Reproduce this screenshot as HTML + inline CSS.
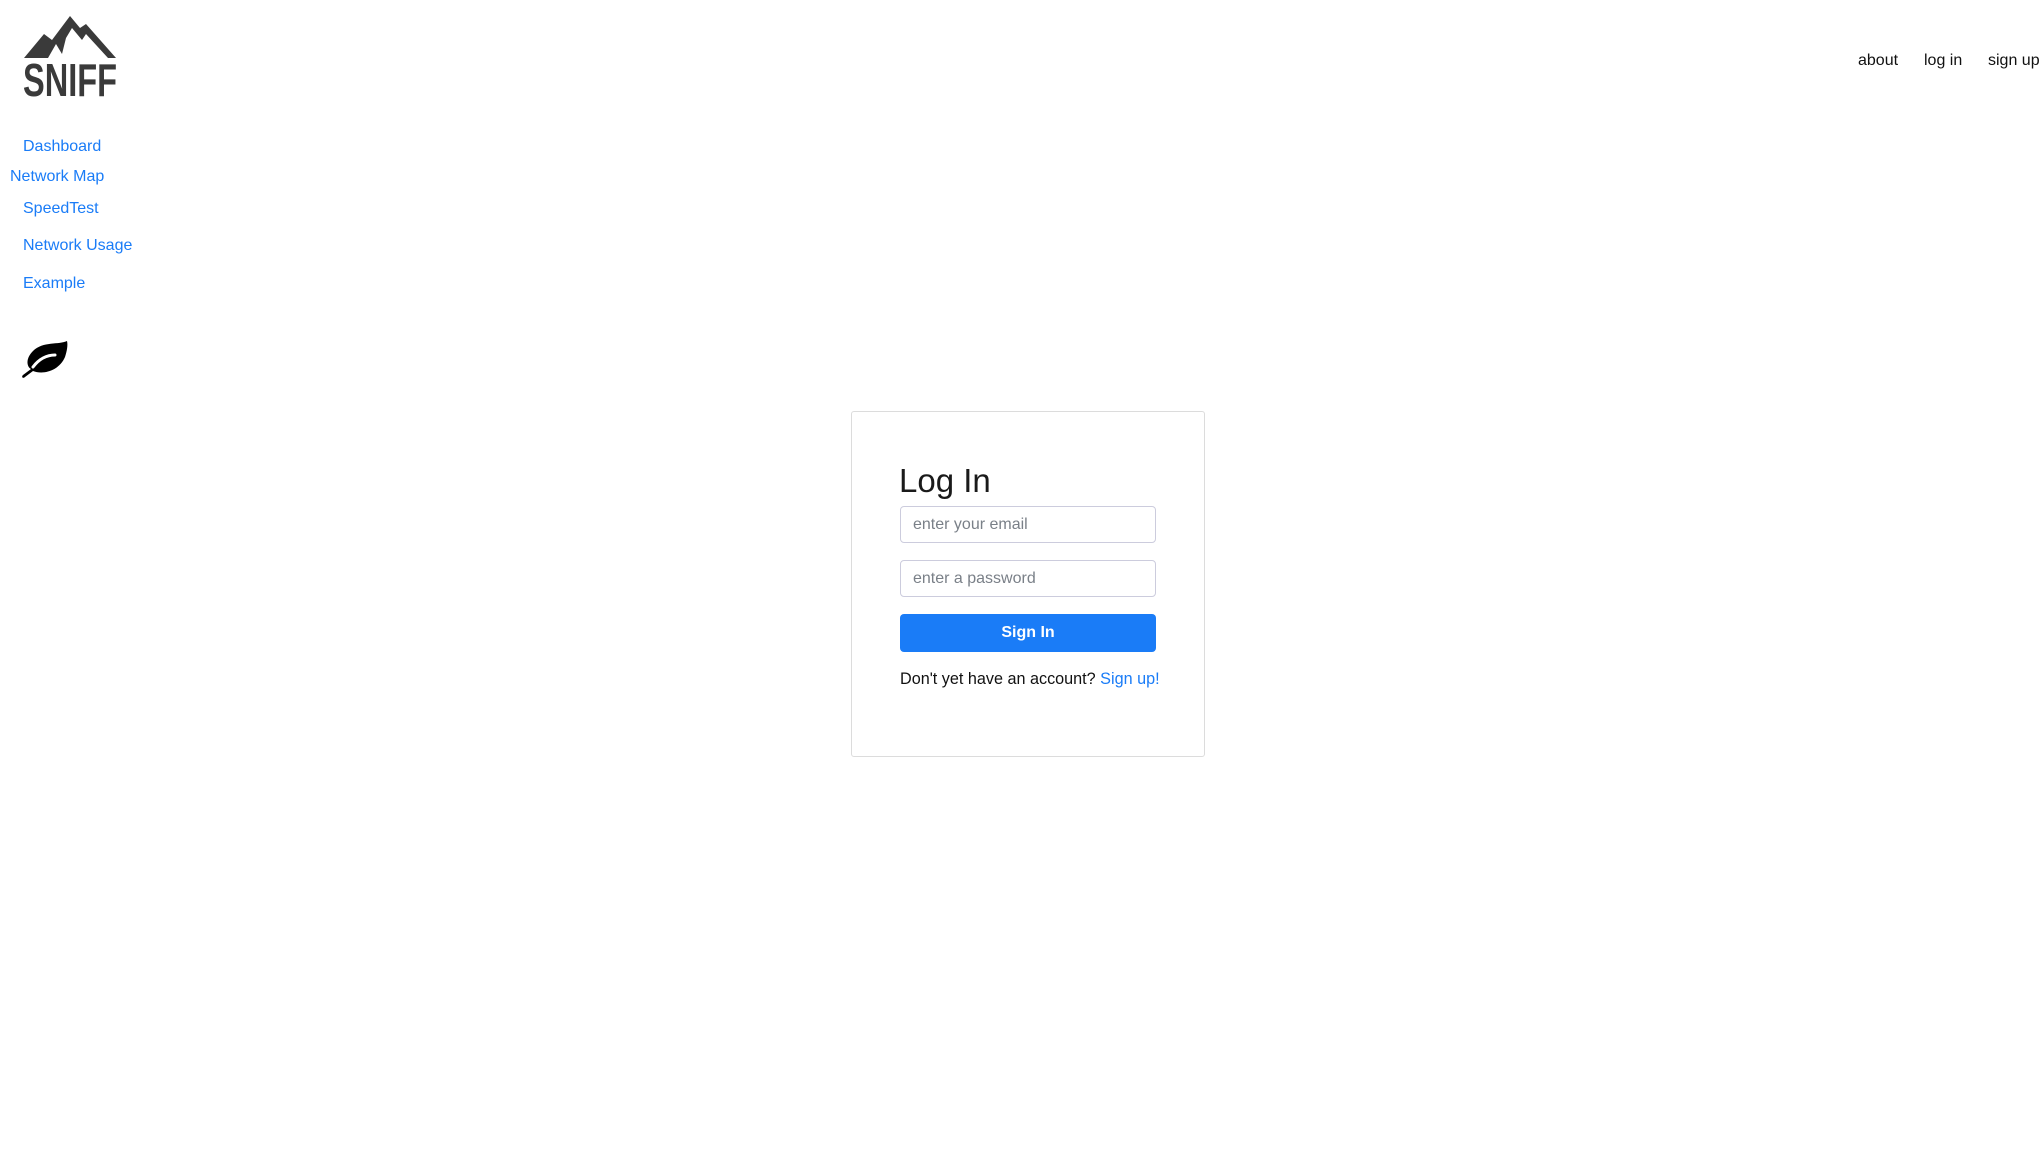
<!DOCTYPE html>
<html><head><meta charset="utf-8"><style>
body{margin:0;width:2040px;height:1157px;background:#fff;font-family:"Liberation Sans",sans-serif;position:relative;overflow:hidden}
.a{position:absolute;white-space:nowrap;line-height:1}
.nav{color:#1a7cf7;font-size:16px}
.top{color:#111;font-size:16px}
.card{position:absolute;left:851px;top:411px;width:352px;height:344px;border:1px solid #dcdcdc;border-radius:3px}
.inp{position:absolute;left:900px;height:37px;border:1px solid #ccd;border-radius:4px;color:#7a8088;font-size:16px;line-height:36px;padding-left:12px;box-sizing:border-box;width:256px}
</style></head><body>
<svg class="a" style="left:22px;top:14px" width="98" height="84" viewBox="0 0 98 84">
<path d="M2 44 L22 20 L30 26 L48 2 L58 14 L64 10 L94 44 L86 44 L64 20 L60 26 L50 14 L44 24 L40 40 L34 30 L26 44 Z" fill="#3a3a3a"/>
<text x="1" y="82" font-family="Liberation Sans Narrow, Liberation Sans, sans-serif" font-weight="bold" font-size="46" fill="#3a3a3a" textLength="94" lengthAdjust="spacingAndGlyphs">SNIFF</text>
</svg>
<div class="a nav" style="left:23px;top:139px">Dashboard</div>
<div class="a nav" style="left:10px;top:169px">Network Map</div>
<div class="a nav" style="left:23px;top:201px">SpeedTest</div>
<div class="a nav" style="left:23px;top:238px">Network Usage</div>
<div class="a nav" style="left:23px;top:276px">Example</div>
<svg class="a" style="left:19px;top:339px" width="50" height="40" viewBox="0 0 50 40">
<path d="M48 2 C40 6 24 2 14 12 C6 20 8 28 12 30 L4 36 C2 38 4 40 6 38 L14 32 C24 36 40 32 46 18 C48 12 49 6 48 2 Z" fill="#000"/>
<path d="M14 28 C20 20 28 16 36 16" stroke="#fff" stroke-width="3" fill="none" stroke-linecap="round"/>
</svg>
<div class="a top" style="left:1858px;top:53px">about</div>
<div class="a top" style="left:1924px;top:53px">log in</div>
<div class="a top" style="left:1988px;top:53px">sign up</div>
<div class="card"></div>
<div class="a" style="left:899px;top:464px;font-size:33px;color:#1a1a1a">Log In</div>
<div class="inp" style="top:506px">enter your email</div>
<div class="inp" style="top:560px">enter a password</div>
<div class="a" style="left:900px;top:614px;width:256px;height:38px;background:#1a7cf7;border-radius:4px;color:#fff;font-weight:600;font-size:16px;line-height:38px;text-align:center">Sign In</div>
<div class="a" style="left:900px;top:671px;font-size:16.2px;color:#111">Don't yet have an account? <span style="color:#1a7cf7">Sign up!</span></div>
</body></html>
